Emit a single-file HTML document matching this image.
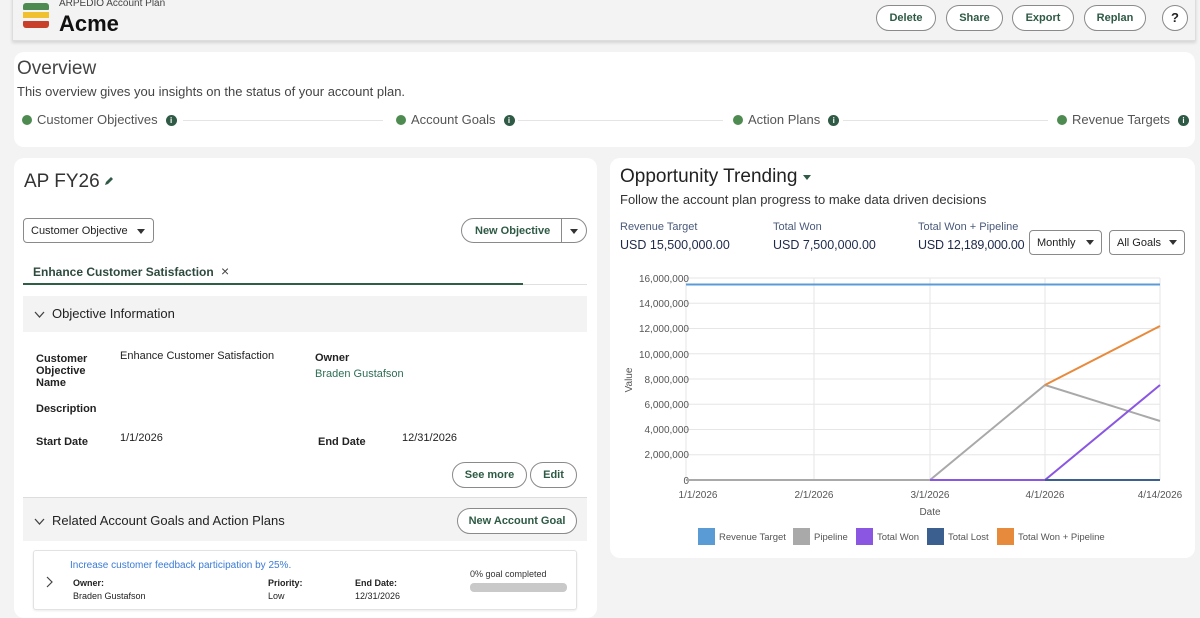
<!DOCTYPE html>
<html><head><meta charset="utf-8"><style>
*{box-sizing:border-box;margin:0;padding:0}
body{width:1200px;height:600px;overflow:hidden;background:#f3f3f3;font-family:"Liberation Sans",sans-serif;color:#181818;position:relative}
.a{position:absolute;white-space:nowrap}
.hdr{position:absolute;left:12px;top:-4px;width:1184px;height:45px;background:#f3f3f3;border:1px solid #ddd;border-top:none;box-shadow:0 2px 3px rgba(0,0,0,.12)}
.pill{position:absolute;border:1px solid #8a8a8a;border-radius:14px;background:#fff;font-size:11px;font-weight:bold;color:#2e5a45;text-align:center;line-height:24px;height:26px}
.card{position:absolute;background:#fff;border-radius:10px}
.dot{display:inline-block;width:10px;height:10px;border-radius:50%;background:#4e8b50;vertical-align:-1px;margin-right:5px}
.info{display:inline-block;width:11px;height:11px;border-radius:50%;background:#2f5a45;color:#fff;font-size:8px;font-weight:bold;text-align:center;line-height:11px;vertical-align:1px;margin-left:8px}
.btn{position:absolute;border:1px solid #8a8a8a;border-radius:13px;background:#fff;font-size:11px;color:#2e5a45;text-align:center;line-height:24px;height:26px;font-weight:bold}
.lbl{font-size:11px;font-weight:bold;color:#222}
.sel{position:absolute;border:1px solid #8a8a8a;border-radius:4px;background:#fff;font-size:11px;color:#222;height:25px;line-height:23px;padding-left:7px}
.tri{position:absolute;width:0;height:0;border-left:4px solid transparent;border-right:4px solid transparent;border-top:5px solid #333}
</style></head><body>
<div class="hdr"></div>
<div class="a" style="left:23px;top:3px;width:26px;height:7px;background:#4e8b50;border-radius:3px 3px 1px 1px"></div>
<div class="a" style="left:23px;top:12px;width:26px;height:6px;background:#f0c030"></div>
<div class="a" style="left:23px;top:21px;width:26px;height:7px;background:#c9402a;border-radius:1px 1px 3px 3px"></div>
<div class="a" style="left:59px;top:-2px;font-size:10px;color:#444">ARPEDIO Account Plan</div>
<div class="a" style="left:59px;top:11px;font-size:22px;font-weight:bold;color:#111">Acme</div>
<div class="pill" style="left:876px;top:5px;width:60px">Delete</div>
<div class="pill" style="left:946px;top:5px;width:57px">Share</div>
<div class="pill" style="left:1012px;top:5px;width:62px">Export</div>
<div class="pill" style="left:1084px;top:5px;width:62px">Replan</div>
<div class="pill" style="left:1162px;top:5px;width:26px;border-radius:50%;font-size:13px;color:#222">?</div>

<div class="card" style="left:14px;top:52px;width:1181px;height:95px"></div>
<div class="a" style="left:17px;top:58px;font-size:19px;color:#444">Overview</div>
<div class="a" style="left:17px;top:84px;font-size:13px;color:#444">This overview gives you insights on the status of your account plan.</div>
<div class="a" style="left:22px;top:112px;font-size:13px;color:#555"><span class="dot"></span>Customer Objectives<span class="info">i</span></div>
<div class="a" style="left:183px;top:120px;width:200px;height:1px;background:#e4e4e4"></div>
<div class="a" style="left:396px;top:112px;font-size:13px;color:#555"><span class="dot"></span>Account Goals<span class="info">i</span></div>
<div class="a" style="left:518px;top:120px;width:205px;height:1px;background:#e4e4e4"></div>
<div class="a" style="left:733px;top:112px;font-size:13px;color:#555"><span class="dot"></span>Action Plans<span class="info">i</span></div>
<div class="a" style="left:843px;top:120px;width:205px;height:1px;background:#e4e4e4"></div>
<div class="a" style="left:1057px;top:112px;font-size:13px;color:#555"><span class="dot"></span>Revenue Targets<span class="info">i</span></div>

<!-- left card -->
<div class="card" style="left:14px;top:158px;width:583px;height:460px"></div>
<div class="a" style="left:24px;top:171px;font-size:19px;color:#333">AP FY26</div>
<svg class="a" style="left:103px;top:175px" width="12" height="12" viewBox="0 0 12 12"><path d="M2 10 L3 7 L8 2 L10 4 L5 9 Z" fill="#2f5a45"/></svg>
<div class="sel" style="left:23px;top:218px;width:131px;line-height:24px">Customer Objective</div>
<div class="tri" style="left:137px;top:229px"></div>
<div class="btn" style="left:461px;top:218px;width:126px;height:25px;line-height:24px;text-align:left;padding-left:13px">New Objective</div>
<div class="a" style="left:561px;top:219px;width:1px;height:23px;background:#8a8a8a"></div>
<div class="tri" style="left:570px;top:229px"></div>
<div class="a" style="left:33px;top:263px;font-size:12px;font-weight:bold;color:#2e4a3e">Enhance Customer Satisfaction <span style="font-weight:normal;font-size:14px;color:#444;margin-left:4px">×</span></div>
<div class="a" style="left:23px;top:284px;width:564px;height:1px;background:#e0e0e0"></div>
<div class="a" style="left:23px;top:283px;width:500px;height:2px;background:#2e5e46"></div>
<div class="a" style="left:23px;top:296px;width:564px;height:36px;background:#f3f3f3"></div>
<svg class="a" style="left:34px;top:311px" width="11" height="8"><path d="M1 1 L5.5 6 L10 1" stroke="#444" fill="none" stroke-width="1.3"/></svg>
<div class="a" style="left:52px;top:306px;font-size:13px;color:#222">Objective Information</div>
<div class="a lbl" style="left:36px;top:353px;line-height:12px">Customer<br>Objective<br>Name</div>
<div class="a" style="left:120px;top:350px;font-size:11px;color:#222">Enhance Customer Satisfaction</div>
<div class="a lbl" style="left:315px;top:352px">Owner</div>
<div class="a" style="left:315px;top:368px;font-size:11px;color:#2e6e56">Braden Gustafson</div>
<div class="a lbl" style="left:36px;top:403px">Description</div>
<div class="a lbl" style="left:36px;top:436px">Start Date</div>
<div class="a" style="left:120px;top:432px;font-size:11px;color:#222">1/1/2026</div>
<div class="a lbl" style="left:318px;top:436px">End Date</div>
<div class="a" style="left:402px;top:432px;font-size:11px;color:#222">12/31/2026</div>
<div class="btn" style="left:452px;top:462px;width:75px">See more</div>
<div class="btn" style="left:530px;top:462px;width:47px">Edit</div>
<div class="a" style="left:23px;top:497px;width:564px;height:44px;background:#f3f3f3;border-top:1px solid #ddd"></div>
<svg class="a" style="left:34px;top:518px" width="11" height="8"><path d="M1 1 L5.5 6 L10 1" stroke="#444" fill="none" stroke-width="1.3"/></svg>
<div class="a" style="left:52px;top:513px;font-size:13px;color:#222">Related Account Goals and Action Plans</div>
<div class="btn" style="left:457px;top:508px;width:120px">New Account Goal</div>
<div class="a" style="left:33px;top:550px;width:544px;height:60px;background:#fff;border:1px solid #e2e2e2;border-radius:3px;box-shadow:0 1px 2px rgba(0,0,0,.08)"></div>
<div class="a" style="left:70px;top:560px;font-size:10px;color:#3a7bd5">Increase customer feedback participation by 25%.</div>
<svg class="a" style="left:46px;top:576px" width="8" height="12"><path d="M1 1 L6 6 L1 11" stroke="#444" fill="none" stroke-width="1.2"/></svg>
<div class="a" style="left:73px;top:578px;font-size:9px;font-weight:bold;color:#222">Owner:</div>
<div class="a" style="left:73px;top:591px;font-size:9px;color:#222">Braden Gustafson</div>
<div class="a" style="left:268px;top:578px;font-size:9px;font-weight:bold;color:#222">Priority:</div>
<div class="a" style="left:268px;top:591px;font-size:9px;color:#222">Low</div>
<div class="a" style="left:355px;top:578px;font-size:9px;font-weight:bold;color:#222">End Date:</div>
<div class="a" style="left:355px;top:591px;font-size:9px;color:#222">12/31/2026</div>
<div class="a" style="left:470px;top:569px;font-size:9px;color:#333">0% goal completed</div>
<div class="a" style="left:470px;top:583px;width:97px;height:9px;background:#c9c9c9;border-radius:4px"></div>

<!-- right card -->
<div class="card" style="left:610px;top:158px;width:585px;height:400px"></div>
<div class="a" style="left:620px;top:166px;font-size:19px;color:#222">Opportunity Trending</div>
<div class="tri" style="left:803px;top:175px;border-top-color:#2f5a45"></div>
<div class="a" style="left:620px;top:192px;font-size:13px;color:#333">Follow the account plan progress to make data driven decisions</div>
<div class="a" style="left:620px;top:221px;font-size:11px;color:#4a5a7a">Revenue Target</div>
<div class="a" style="left:620px;top:238px;font-size:12.5px;color:#1e2a4a">USD 15,500,000.00</div>
<div class="a" style="left:773px;top:221px;font-size:11px;color:#4a5a7a">Total Won</div>
<div class="a" style="left:773px;top:238px;font-size:12.5px;color:#1e2a4a">USD 7,500,000.00</div>
<div class="a" style="left:918px;top:221px;font-size:11px;color:#4a5a7a">Total Won + Pipeline</div>
<div class="a" style="left:918px;top:238px;font-size:12.5px;color:#1e2a4a;letter-spacing:-0.2px">USD 12,189,000.00</div>
<div class="sel" style="left:1029px;top:230px;width:73px;line-height:24px">Monthly</div>
<div class="tri" style="left:1086px;top:240px"></div>
<div class="sel" style="left:1109px;top:230px;width:76px;line-height:24px">All Goals</div>
<div class="tri" style="left:1169px;top:240px"></div>
<svg class="a" style="left:610px;top:260px" width="585" height="290" font-family="Liberation Sans, sans-serif" font-size="10" fill="#555">
<g stroke="#e6e6e6" stroke-width="1">
<line x1="76" y1="18" x2="550" y2="18"/><line x1="76" y1="43.25" x2="550" y2="43.25"/><line x1="76" y1="68.5" x2="550" y2="68.5"/><line x1="76" y1="93.75" x2="550" y2="93.75"/><line x1="76" y1="119" x2="550" y2="119"/><line x1="76" y1="144.25" x2="550" y2="144.25"/><line x1="76" y1="169.5" x2="550" y2="169.5"/><line x1="76" y1="194.75" x2="550" y2="194.75"/>
<line x1="76" y1="18" x2="76" y2="220"/><line x1="204" y1="18" x2="204" y2="220"/><line x1="320" y1="18" x2="320" y2="220"/><line x1="435" y1="18" x2="435" y2="220"/><line x1="550" y1="18" x2="550" y2="220"/>
</g>
<g text-anchor="end">
<text x="79" y="22">16,000,000</text><text x="79" y="47">14,000,000</text><text x="79" y="72">12,000,000</text><text x="79" y="98">10,000,000</text><text x="79" y="123">8,000,000</text><text x="79" y="148">6,000,000</text><text x="79" y="173">4,000,000</text><text x="79" y="198">2,000,000</text><text x="79" y="224">0</text>
</g>
<g text-anchor="middle">
<text x="88" y="238">1/1/2026</text><text x="204" y="238">2/1/2026</text><text x="320" y="238">3/1/2026</text><text x="435" y="238">4/1/2026</text><text x="550" y="238">4/14/2026</text>
<text x="320" y="255">Date</text>
<text transform="translate(22 120) rotate(-90)">Value</text>
</g>
<line x1="76" y1="24.5" x2="550" y2="24.5" stroke="#5b9bd5" stroke-width="2"/>
<polyline points="76,220 320,220 435,125 550,161" stroke="#a9a9a9" stroke-width="2" fill="none"/>
<polyline points="320,220 435,220 550,125" stroke="#8a56e2" stroke-width="2" fill="none"/>
<line x1="435" y1="220" x2="550" y2="220" stroke="#3b5f8f" stroke-width="2"/>
<polyline points="435,125 550,66" stroke="#e88a3c" stroke-width="2" fill="none"/>
<g font-size="9.5">
<rect x="88" y="268" width="17" height="17" fill="#5b9bd5"/><text x="109" y="280">Revenue Target</text>
<rect x="183" y="268" width="17" height="17" fill="#a9a9a9"/><text x="204" y="280">Pipeline</text>
<rect x="246" y="268" width="17" height="17" fill="#8a56e2"/><text x="267" y="280">Total Won</text>
<rect x="317" y="268" width="17" height="17" fill="#3b5f8f"/><text x="338" y="280">Total Lost</text>
<rect x="387" y="268" width="17" height="17" fill="#e88a3c"/><text x="408" y="280">Total Won + Pipeline</text>
</g>
</svg>
</body></html>
